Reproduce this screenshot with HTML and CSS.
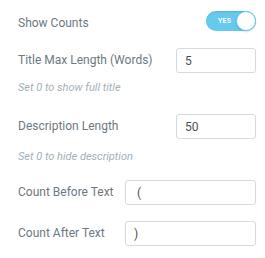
FILE: index.html
```html
<!DOCTYPE html>
<html lang="en">
<head>
	<meta charset="UTF-8">
	<title>Count settings</title>
	<link rel="stylesheet" href="styles.css">
</head>
<body>
	<div class="panel">
		<div class="control control-switch">
			<label class="control-label">Show Counts</label>
			<span class="switcher">
				<span class="switcher-text">YES</span>
				<span class="switcher-knob"></span>
			</span>
		</div>

		<div class="control control-number control-first">
			<label class="control-label">Title Max Length (Words)</label>
			<input class="control-input" type="text" value="5">
		</div>
		<p class="control-desc desc-first">Set 0 to show full title</p>

		<div class="control control-number control-second">
			<label class="control-label">Description Length</label>
			<input class="control-input" type="text" value="50">
		</div>
		<p class="control-desc">Set 0 to hide description</p>

		<div class="control control-text">
			<label class="control-label">Count Before Text</label>
			<input class="control-input" type="text" value=" (">
		</div>

		<div class="control control-text">
			<label class="control-label">Count After Text</label>
			<input class="control-input" type="text" value=")">
		</div>
	</div>
</body>
</html>
```

FILE: styles.css
```css
* {
	box-sizing: border-box;
}

html, body {
	margin: 0;
	padding: 0;
	background: #fff;
}

body {
	font-family: Roboto, "Liberation Sans", sans-serif;
	font-size: 12px;
	color: #6d7882;
}

.panel {
	padding: 11px 9px 0 18px;
}

.control {
	display: flex;
	align-items: center;
	justify-content: space-between;
}

.control-label {
	font-size: 12px;
	line-height: 15px;
	color: #6d7882;
}

.control-switch {
	height: 20px;
}
.control-switch .control-label {
	padding-top: 4px;
}

.control-first {
	margin-top: 17px;
}
.control-second {
	margin-top: 19px;
}

.control-text {
	margin-top: 16px;
}

.control-input {
	height: 25px;
	border: 1px solid #d5dadf;
	border-radius: 3px;
	padding: 0 8px;
	font-family: inherit;
	font-size: 12px;
	color: #495157;
	background: #fff;
	outline: none;
	white-space: pre;
}

.control-number .control-input {
	width: 80px;
}

.control-text .control-input {
	width: 131px;
}

.control-desc {
	margin: 11px 0 0;
	font-size: 11px;
	line-height: 14px;
	font-style: italic;
	color: #a4afb7;
}
.desc-first {
	margin-top: 8px;
}

/* switch */
.switcher {
	position: relative;
	display: flex;
	align-items: center;
	width: 50px;
	height: 20px;
	border-radius: 10px;
	background: #66c9ee;
	box-shadow: inset 0 1px 2px rgb(0 0 0 / 0.12);
}

.switcher-text {
	padding-left: 12px;
	font-size: 7px;
	font-weight: 700;
	color: #fff;
	letter-spacing: 0.2px;
}

.switcher-knob {
	position: absolute;
	top: 0;
	right: 0;
	width: 20px;
	height: 20px;
	border-radius: 50%;
	background: #fff;
	border: 1px solid #66c9ee;
	box-shadow: 0 1px 2px rgb(0 0 0 / 0.15);
}
```
